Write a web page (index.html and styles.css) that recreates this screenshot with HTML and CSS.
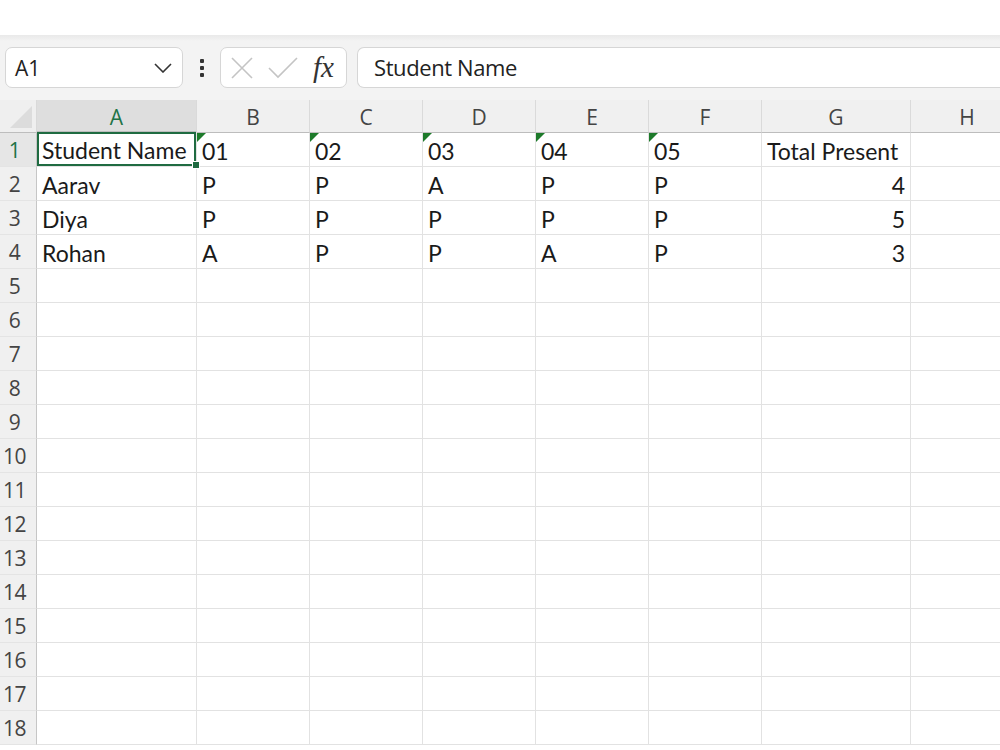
FILE: index.html
```html
<!DOCTYPE html>
<html lang="en">
<head>
    <meta charset="UTF-8">
    <meta name="viewport" content="width=device-width, initial-scale=1.0">
    <title>Attendance</title>
    <link rel="stylesheet" href="styles.css">
</head>
<body>

    <div class="topSpace"></div>

    <div class="formulaBar">
        <div class="nameBox">
            <span class="nameText">A1</span>
            <svg class="chevron" width="18" height="10" viewBox="0 0 18 10"><path d="M1 1 L9 9 L17 1" fill="none" stroke="#333" stroke-width="1.6"/></svg>
        </div>
        <div class="moreDots">
            <span></span><span></span><span></span>
        </div>
        <div class="fxButtons">
            <svg width="24" height="24" viewBox="0 0 24 24"><path d="M2 2 L22 22 M22 2 L2 22" stroke="#c4c4c4" stroke-width="1.6" fill="none"/></svg>
            <svg width="30" height="22" viewBox="0 0 30 22"><path d="M1 11 L10 20 L29 1" stroke="#c4c4c4" stroke-width="1.6" fill="none"/></svg>
            <span class="fx">fx</span>
        </div>
        <div class="formulaInput">Student Name</div>
    </div>

    <div class="sheet">
        <div class="corner"><span class="cornerTri"></span></div>
        <div class="colHead active">A</div>
        <div class="colHead">B</div>
        <div class="colHead">C</div>
        <div class="colHead">D</div>
        <div class="colHead">E</div>
        <div class="colHead">F</div>
        <div class="colHead">G</div>
        <div class="colHead">H</div>

        <div class="rowHead active">1</div>
        <div class="cell selected">Student Name<span class="handle"></span></div>
        <div class="cell flag">01</div>
        <div class="cell flag">02</div>
        <div class="cell flag">03</div>
        <div class="cell flag">04</div>
        <div class="cell flag">05</div>
        <div class="cell">Total Present</div>
        <div class="cell"></div>

        <div class="rowHead">2</div>
        <div class="cell">Aarav</div>
        <div class="cell">P</div>
        <div class="cell">P</div>
        <div class="cell">A</div>
        <div class="cell">P</div>
        <div class="cell">P</div>
        <div class="cell num">4</div>
        <div class="cell"></div>

        <div class="rowHead">3</div>
        <div class="cell">Diya</div>
        <div class="cell">P</div>
        <div class="cell">P</div>
        <div class="cell">P</div>
        <div class="cell">P</div>
        <div class="cell">P</div>
        <div class="cell num">5</div>
        <div class="cell"></div>

        <div class="rowHead">4</div>
        <div class="cell">Rohan</div>
        <div class="cell">A</div>
        <div class="cell">P</div>
        <div class="cell">P</div>
        <div class="cell">A</div>
        <div class="cell">P</div>
        <div class="cell num">3</div>
        <div class="cell"></div>
    </div>

    <script>
        // empty rows 5 - 18
        var sheet = document.querySelector('.sheet');
        for (var r = 5; r <= 18; r++) {
            var head = document.createElement('div');
            head.className = 'rowHead';
            head.textContent = r;
            sheet.appendChild(head);
            for (var c = 0; c < 8; c++) {
                var cell = document.createElement('div');
                cell.className = 'cell';
                sheet.appendChild(cell);
            }
        }
    </script>
</body>
</html>
```

FILE: styles.css
```css
body {
    margin: 0;
    overflow: hidden;
    background-color: #fff;
    font-family: 'Open Sans', 'Liberation Sans', sans-serif;
    color: #222;
}

.topSpace {
    height: 35px;
    background-color: #fff;
}

.formulaBar {
    height: 65px;
    box-sizing: border-box;
    padding: 12px 0 0 5px;
    display: flex;
    align-items: flex-start;
    background: linear-gradient(#e9e9e9, #f3f3f3 6px);
}

.nameBox {
    width: 178px;
    height: 41px;
    box-sizing: border-box;
    background-color: #fff;
    border: 1px solid #d6d6d6;
    border-radius: 7px;
    display: flex;
    align-items: center;
    justify-content: space-between;
    padding: 0 10px 0 9px;
}

.nameText {
    font-size: 21px;
    color: #222;
}

.moreDots {
    width: 37px;
    height: 41px;
    display: flex;
    flex-direction: column;
    align-items: center;
    justify-content: center;
    gap: 3px;
}

.moreDots span {
    width: 4px;
    height: 4px;
    background-color: #333;
    border-radius: 1px;
}

.fxButtons {
    width: 127px;
    height: 41px;
    box-sizing: border-box;
    background-color: #fff;
    border: 1px solid #d6d6d6;
    border-radius: 7px;
    display: flex;
    align-items: center;
    gap: 14px;
    padding-left: 9px;
}

.fx {
    font-family: 'Liberation Serif', 'DejaVu Serif', serif;
    font-style: italic;
    font-size: 29px;
    color: #333;
    margin-left: 1px;
    line-height: 1;
}

.formulaInput {
    flex: 1;
    height: 41px;
    box-sizing: border-box;
    margin-left: 10px;
    background-color: #fff;
    border: 1px solid #d6d6d6;
    border-right: none;
    border-radius: 7px 0 0 7px;
    padding-left: 16px;
    font-size: 22px;
    line-height: 39px;
    letter-spacing: -0.4px;
    color: #222;
}

.sheet {
    display: grid;
    grid-template-columns: 37px 160px 113px 113px 113px 113px 113px 149px 113px;
    grid-auto-rows: 34px;
    grid-template-rows: 33px;
    background-color: #fff;
}

.corner {
    background-color: #efefef;
    border-right: 1px solid #d9d9d9;
    border-bottom: 1px solid #bdbdbd;
    position: relative;
}

.cornerTri {
    position: absolute;
    right: 4px;
    bottom: 4px;
    width: 0;
    height: 0;
    border-left: 22px solid transparent;
    border-bottom: 22px solid #dcdcdc;
}

.colHead {
    background-color: #f0f0f0;
    border-right: 1px solid #dadada;
    border-bottom: 1px solid #bdbdbd;
    text-align: center;
    font-size: 21px;
    line-height: 34px;
    color: #444;
}

.colHead.active {
    background-color: #dedede;
    color: #217346;
    border-bottom: 2px solid #bdbdbd;
}

.rowHead {
    background-color: #f0f0f0;
    border-right: 1px solid #c6c6c6;
    border-bottom: 1px solid #e4e4e4;
    font-size: 21px;
    line-height: 34px;
    padding-right: 7px;
    text-align: center;
    letter-spacing: -0.5px;
    color: #444;
}

.rowHead.active {
    color: #217346;
    background-color: #e6e6e6;
}

.cell {
    border-right: 1px solid #e2e2e2;
    border-bottom: 1px solid #e2e2e2;
    font-family: 'Lato', 'Open Sans', sans-serif;
    font-size: 23px;
    line-height: 37px;
    padding: 0 5px;
    white-space: nowrap;
    overflow: visible;
    color: #1a1a1a;
    position: relative;
}

.cell.num {
    text-align: right;
}

.cell.flag::before {
    content: '';
    position: absolute;
    left: 0;
    top: 0;
    border-top: 9px solid #1d7a2a;
    border-right: 9px solid transparent;
}

.cell.selected {
    box-shadow: inset 0 0 0 2px #1f6b41;
    margin: -1px 0 0 0;
    z-index: 1;
}

.handle {
    position: absolute;
    right: -4px;
    bottom: -3px;
    width: 6px;
    height: 6px;
    background-color: #1f6b41;
    border: 1px solid #fff;
}
```
